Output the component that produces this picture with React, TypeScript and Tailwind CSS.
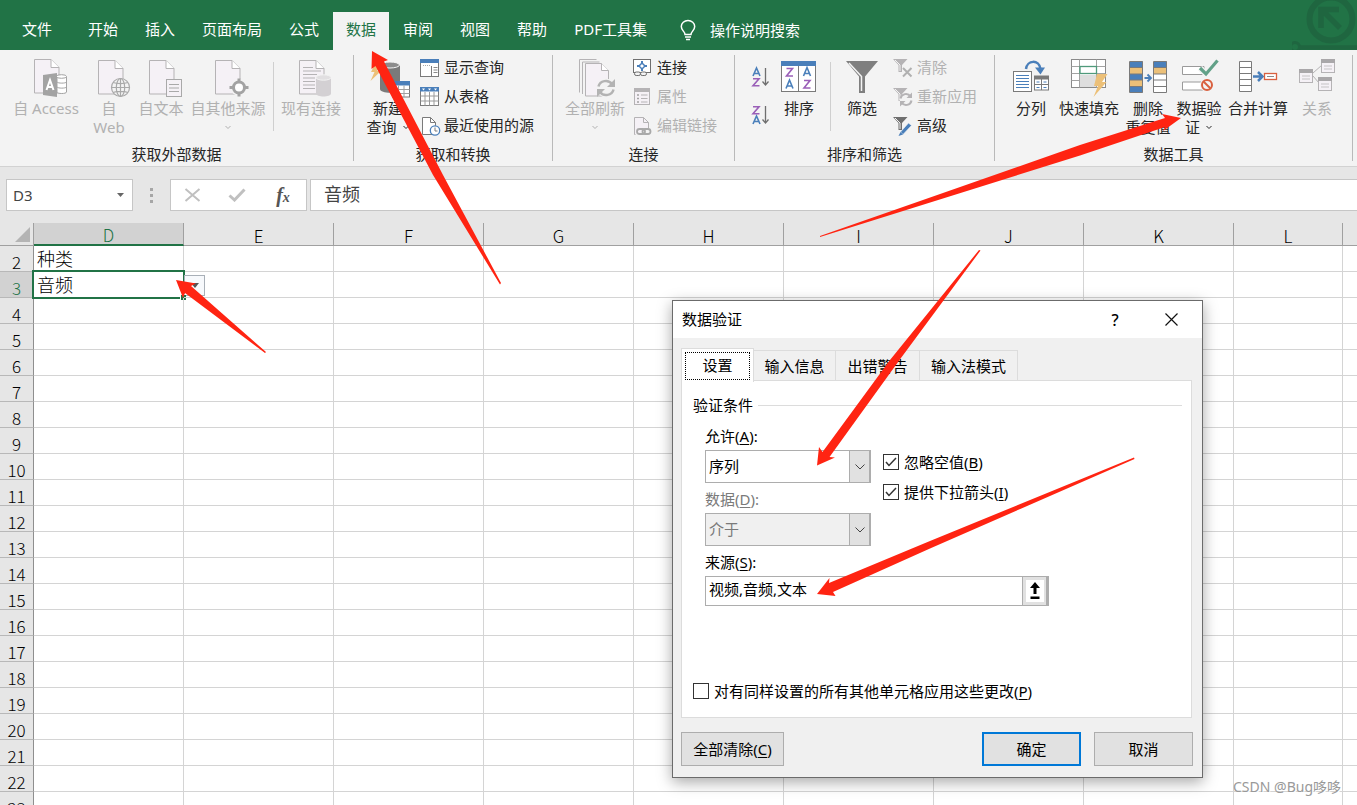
import { useState } from 'react';
import type { FC, ReactNode } from 'react';
import clsx from 'clsx';

const TABS = ['文件', '开始', '插入', '页面布局', '公式', '数据', '审阅', '视图', '帮助', 'PDF工具集'];
const COLUMNS = ['D', 'E', 'F', 'G', 'H', 'I', 'J', 'K', 'L', ''];
const ROWS = Array.from({ length: 22 }, (_, i) => i + 2);
const CELLS: Record<string, string> = { D2: '种类', D3: '音频' };

/* ---------- icons ---------- */

const Big: FC<{ children: ReactNode }> = ({ children }) => (
  <svg width="40" height="40" viewBox="0 0 40 40" fill="none" className="mb-px shrink-0 overflow-visible" aria-hidden="true">
    {children}
  </svg>
);

const Small: FC<{ children: ReactNode }> = ({ children }) => (
  <svg width="20" height="20" viewBox="0 0 20 20" fill="none" className="shrink-0 overflow-visible" aria-hidden="true">
    {children}
  </svg>
);

const Page: FC<{ x?: number; y?: number }> = ({ x = 8.5, y = 2.5 }) => (
  <g transform={`translate(${x} ${y})`} stroke="#b5b3b5">
    <path d="M0 0h16.500l8 8v25.500H0z" fill="#f5f1f6" />
    <path d="M16.500 0v8h8" fill="#fff" />
  </g>
);

const AccessIcon = () => (
  <Big>
    <Page x={8.500} y={1.500} />
    <path d="M31 18.500v15.500c0 2 9.500 2 9.500 0v-15.500" fill="#fff" stroke="#a3a3a3" />
    <ellipse cx="35.500" cy="18.500" rx="5" ry="1.800" fill="#fff" stroke="#a3a3a3" />
    <path d="M31 24c1 1.500 8.500 1.500 9.500 0M31 29c1 1.500 8.500 1.500 9.500 0" stroke="#a3a3a3" />
    <path d="M17 17l14-2v24l-14-2z" fill="#a3a3a3" />
    <path d="M20.500 32l3.500-10 3.500 10M21.700 29h4.600" stroke="#fff" strokeWidth="2" />
  </Big>
);

const WebIcon = () => (
  <Big>
    <Page x={9.500} />
    <g stroke="#a9a9a9" strokeWidth="1.200">
      <circle cx="31.500" cy="29.500" r="9" fill="#f3f3f3" />
      <ellipse cx="31.500" cy="29.500" rx="4.200" ry="9" />
      <path d="M22.500 29.500h18M31.500 20.500v18M24 24.500c4 1.500 11 1.500 15 0M24 34.500c4-1.500 11-1.500 15 0" />
    </g>
  </Big>
);

const TextFileIcon = () => (
  <Big>
    <Page />
    <rect x="25.500" y="21.500" width="15" height="17" fill="#f5f1f6" stroke="#a9a9a9" />
    <path d="M28 26.500h10M28 30h10M28 33.500h10" stroke="#a9a9a9" />
  </Big>
);

const OtherSourceIcon = () => (
  <Big>
    <Page x={7.500} />
    <circle cx="31" cy="29.500" r="8.500" fill="#f3f3f3" />
    <circle cx="31" cy="29.500" r="5.500" stroke="#a3a3a3" strokeWidth="3" fill="#fff" />
    <path d="M31 20.500v4M31 34.500v4M21.500 29.500h4M36.500 29.500h4" stroke="#a3a3a3" strokeWidth="3" />
  </Big>
);

const ExistingIcon = () => (
  <Big>
    <Page />
    <path d="M12 9.500h10M12 13h18M12 16.500h14M12 20h12M12 23.500h12M12 27h12M12 30.500h12" stroke="#b5b3b5" />
    <path d="M25 19.500v16c0 4 15 4 15 0v-16z" fill="#d3d0d3" />
    <ellipse cx="32.500" cy="19.500" rx="7.500" ry="2.700" fill="#e1dfe1" stroke="#f3f3f3" />
  </Big>
);

const NewQueryIcon = () => (
  <Big>
    <path d="M6 8l8-2-5 7h4l-10.500 10 4-9H3z" fill="#ecc078" />
    <path d="M12 7v24c0 5 20 5 20 0V7z" fill="#7a7a7a" />
    <ellipse cx="22" cy="7" rx="9.500" ry="3" fill="#8c8c8c" stroke="#f3f3f3" />
    <rect x="24.500" y="23.500" width="17" height="15.500" fill="#fff" stroke="#7a7a7a" />
    <path d="M24 23h18v4.500H24z" fill="#4a7fba" />
    <path d="M24.500 31.500h17M24.500 35.500h17M30.500 27.500v11.500M36 27.500v11.500" stroke="#a0a0a0" />
  </Big>
);

const RefreshAllIcon = () => (
  <Big>
    <path d="M4.500 34.500v-33h17M7.500 36v-32h17" stroke="#b5b3b5" />
    <g stroke="#b5b3b5">
      <path d="M10.500 5.500h16l7 7v25.500h-23z" fill="#f5f1f6" />
      <path d="M26.500 5.500v7h7" fill="#fff" />
    </g>
    <circle cx="31" cy="30" r="9.500" fill="#f3f3f3" />
    <path d="M23.500 28.500a7.500 7 0 0 1 13.500-2.500M38.500 31.500a7.500 7 0 0 1-13.500 2.500" stroke="#b3b3b3" strokeWidth="2.500" />
    <path d="M40 21v8h-8zM22 39v-8h8z" fill="#b3b3b3" />
  </Big>
);

const SortIcon = () => (
  <Big>
    <rect x="2.500" y="3.500" width="34" height="30" fill="#fff" stroke="#7a7a7a" />
    <path d="M2 3h35v5H2z" fill="#4a7fba" />
    <path d="M19.500 8v25" stroke="#7a7a7a" />
    <g strokeWidth="1.600">
      <path d="M7.500 10.500h6l-6 7.500h6.500M25 22.500h6l-6 7.500h6.500" stroke="#9a5fb8" />
      <path d="M7 30.500l3.500-8.500 3.500 8.500M8.200 28h4.600M24.500 18l3.500-8.500 3.500 8.500M25.700 15.500h4.600" stroke="#4a7fba" />
    </g>
  </Big>
);

const FilterIcon = () => (
  <Big>
    <path d="M4 3h32L23 18.500V35h-6V18.500z" fill="#7f7f7f" />
    <path d="M7 5l12.500 13.500V33" stroke="#f3f3f3" strokeWidth="1.500" />
  </Big>
);

const SplitIcon = () => (
  <Big>
    <rect x="2.500" y="13.500" width="18" height="20" fill="#fff" stroke="#7a7a7a" />
    <path d="M5 17.500h13M5 20.500h13M5 23.500h13M5 26.500h13M5 29.500h13" stroke="#4a7fba" />
    <rect x="23.500" y="18.500" width="14" height="13.500" fill="#fff" stroke="#7a7a7a" />
    <path d="M23 17.500h15v4H23z" fill="#7a7a7a" />
    <path d="M30.500 21v11M23.500 26.500h14" stroke="#7a7a7a" />
    <path d="M25.500 24h3M32.500 24h3M25.500 29.500h3M32.500 29.500h3" stroke="#4a7fba" />
    <path d="M15 11C16 2 28 1 29.500 11" stroke="#4a7fba" strokeWidth="2.500" />
    <path d="M24 9.500h10l-4.500 7z" fill="#4a7fba" />
  </Big>
);

const FlashFillIcon = () => (
  <Big>
    <rect x="2.500" y="1.500" width="34" height="28" fill="#fff" stroke="#8a8a8a" />
    <path d="M11 17h17v12H11z" fill="#dedede" />
    <path d="M2.500 8.500h34M2.500 15.500h34M2.500 22.500h8M10.500 1.500v28M27.500 1.500v28" stroke="#a3a3a3" />
    <rect x="11" y="8.500" width="16.500" height="7" fill="#fff" stroke="#4f9a7b" strokeWidth="1.300" />
    <path d="M28 16h10.500L33 24h4.500L24.500 39l4.500-11h-4z" fill="#ecc078" />
  </Big>
);

const DedupeIcon = () => (
  <Big>
    <path d="M2 3.500h13v31H2zM26 3.500h13v31H26z" fill="#fff" />
    <path d="M2 3.500h13v6H2zM2 16h13v6H2zM2 28.500h13v6H2zM26 3.500h13v6H26z" fill="#4a7fba" />
    <path d="M2 9.500h13v6.500H2zM2 22h13v6.500H2zM26 9.500h13v6.500H26z" fill="#ecc078" />
    <path
      d="M1.500 3.500h13v31h-13zM25.500 3.500h13v31h-13zM1.500 9.500h13M1.500 16h13M1.500 22h13M1.500 28.500h13M25.500 9.500h13M25.500 16h13M25.500 22h13M25.500 28.500h13"
      stroke="#7a7a7a"
    />
    <path d="M16.500 20h6M19.500 16.500l3.500 3.500-3.500 3.500" stroke="#4a7fba" strokeWidth="1.800" />
  </Big>
);

const ValidationIcon = () => (
  <Big>
    <path d="M3.500 8.500H25v8H3.500zM3.500 24H25v8H3.500z" fill="#fff" stroke="#9a9a9a" />
    <path d="M21 10l6 6L38.500 2.500" stroke="#f3f3f3" strokeWidth="6" />
    <path d="M21 10l6 6L38.500 2.500" stroke="#62a188" strokeWidth="3.200" />
    <circle cx="28" cy="27" r="7" fill="#f3f3f3" />
    <circle cx="28" cy="27" r="5" stroke="#d9603f" strokeWidth="2" />
    <path d="M24.500 23.500l7 7" stroke="#d9603f" strokeWidth="2" />
  </Big>
);

const ConsolidateIcon = () => (
  <Big>
    <path d="M1.500 3.500h12v30h-12zM1.500 9.500h12M1.500 15.500h12M1.500 21.500h12M1.500 27.500h12" fill="#fff" stroke="#7a7a7a" />
    <path d="M15 18.500h8M20 14l4.500 4.500L20 23" stroke="#4a7fba" strokeWidth="2.500" />
    <rect x="26.500" y="15.500" width="12" height="6" fill="#fff" stroke="#d9603f" strokeWidth="1.300" />
    <path d="M29 18.500h7" stroke="#8a8a8a" />
  </Big>
);

const RelationIcon = () => (
  <Big>
    <path d="M16 15l9-8M16 18l6 7" stroke="#b5b3b5" />
    {[[2.5, 11.5], [24.5, 1.5], [21.5, 19.5]].map(([x, y]) => (
      <g key={x} transform={`translate(${x} ${y})`}>
        <rect width="13" height="13" fill="#f5f1f6" stroke="#b5b3b5" />
        <path d="M-.500-.500h14v4h-14z" fill="#a9a7a9" />
        <path d="M2.500 6.500h8M2.500 9.500h8" stroke="#c5c3c5" />
      </g>
    ))}
  </Big>
);

const ShowQueryIcon = () => (
  <Small>
    <rect x=".5" y="1.500" width="18" height="17" fill="#fff" stroke="#7a7a7a" />
    <path d="M0 1h19v4H0z" fill="#4a7fba" />
    <path d="M11.500 8v10.500" stroke="#7a7a7a" />
    <path d="M13.500 9.500h4M13.500 12h4M13.500 14.500h4" stroke="#8a8a8a" />
    <path d="M3 7.500h8" stroke="#a9a9a9" strokeDasharray="1 1" />
  </Small>
);

const FromTableIcon = () => (
  <Small>
    <rect x=".5" y=".5" width="18" height="18" fill="#fff" stroke="#7a7a7a" />
    <path d="M0 0h19v4.500H0z" fill="#4a7fba" />
    <path d="M2 1.500h3l-1.500 2zM8 1.500h3l-1.500 2zM14 1.500h3l-1.500 2z" fill="#fff" />
    <path d="M.5 9h18M.5 14h18M5 5v13.500M9.500 5v13.500M14 5v13.500" stroke="#9a9a9a" />
  </Small>
);

const RecentIcon = () => (
  <Small>
    <path d="M2.500 1.500h8l5 5v12h-13z" fill="#fff" stroke="#7a7a7a" />
    <path d="M10.500 1.500v5h5" stroke="#7a7a7a" />
    <circle cx="15" cy="14.500" r="4.700" fill="#fff" stroke="#4a7fba" strokeWidth="1.300" />
    <path d="M15 11.500v3.500h2.500" stroke="#7a7a7a" />
  </Small>
);

const ConnectionIcon = () => (
  <Small>
    <rect x=".5" y="1.500" width="17" height="13" fill="#fff" stroke="#6f6f6f" />
    <path d="M9 5l3 3-3 3-3-3z" stroke="#4a7fba" strokeWidth="1.500" />
    <path d="M9 3v2M9 11v2M4 8h2M12 8h2" stroke="#4a7fba" strokeWidth="2" />
    <rect x="1.500" y="14" width="6" height="3.500" rx="1.700" fill="#f3f3f3" stroke="#6f6f6f" />
    <rect x="7.500" y="14" width="6" height="3.500" rx="1.700" fill="#f3f3f3" stroke="#6f6f6f" />
  </Small>
);

const PropertiesIcon = () => (
  <Small>
    <rect x="1.500" y="1.500" width="15" height="16" fill="#f5f1f6" stroke="#b5b3b5" />
    <path d="M1 1h16v4H1z" fill="#b5b3b5" />
    <path d="M8 8h6.500M8 11.500h6.500M8 15h6.500" stroke="#b5b3b5" />
    <path d="M4 8h2M4 11.500h2M4 15h2" stroke="#a3a3a3" strokeWidth="1.500" />
  </Small>
);

const EditLinkIcon = () => (
  <Small>
    <path d="M2.500 18.500h-1v-17h9l5 5v6" fill="#f5f1f6" stroke="#b5b3b5" />
    <path d="M10.500 1.500v5h5" stroke="#b5b3b5" />
    <rect x="4" y="13" width="8" height="5" rx="2.500" stroke="#a9a9a9" strokeWidth="1.800" />
    <rect x="9.500" y="13" width="8" height="5" rx="2.500" stroke="#a9a9a9" strokeWidth="1.800" />
  </Small>
);

const MiniFunnel: FC<{ color: string }> = ({ color }) => (
  <>
    <path d="M0 1h14.500L9 7v7H5.500V7z" fill={color} />
    <path d="M2 2l5 5v6" stroke="#f3f3f3" />
  </>
);

const ClearIcon = () => (
  <Small>
    <MiniFunnel color="#b5b3b5" />
    <path d="M10 10l8.500 8.500M18.500 10L10 18.500" stroke="#b0b0b0" strokeWidth="2" />
  </Small>
);

const ReapplyIcon = () => (
  <Small>
    <MiniFunnel color="#b5b3b5" />
    <circle cx="13" cy="12.500" r="6.500" fill="#f3f3f3" />
    <path d="M7.500 11.500a5.500 5.500 0 0 1 10-2M18.500 13.500a5.500 5.500 0 0 1-10 2" stroke="#b5b3b5" strokeWidth="2" />
    <path d="M19 5.500v5.500h-5.500zM7 19.500V14h5.500z" fill="#b5b3b5" />
  </Small>
);

const AdvancedIcon = () => (
  <Small>
    <MiniFunnel color="#6f6f6f" />
    <path d="M7.500 16L15.500 7l3 2.500L10 18.500z" fill="#4a7fba" stroke="#f3f3f3" strokeWidth=".6" />
    <path d="M7.500 16l2.500 2.500-4.500 1.500z" fill="#4a7fba" />
  </Small>
);

const AzIcon: FC<{ desc?: boolean }> = ({ desc }) => (
  <Small>
    <g strokeWidth="1.600">
      <path d="M2 9l3.500-8L9 9M3.300 6.500h4.400" stroke="#4a7fba" transform={desc ? 'translate(0 10)' : undefined} />
      <path d="M2 11.800h6l-6 7h6.500" stroke="#9a5fb8" transform={desc ? 'translate(0 -10)' : undefined} />
    </g>
    <path d="M14.500 1v17M11.500 14.500l3 3.500 3-3.500" stroke="#6f6f6f" strokeWidth="1.300" />
  </Small>
);

const Chevron = () => (
  <svg width="8" height="5" viewBox="0 0 8 5" fill="none" aria-hidden="true">
    <path d="M1.500 1L4 3.500 6.500 1" stroke="currentColor" />
  </svg>
);

/* ---------- ribbon ---------- */

type BigButtonProps = { icon: ReactNode; lines: string[]; chevron?: boolean; disabled?: boolean; className: string };

const BigButton: FC<BigButtonProps> = ({ icon, lines, chevron, disabled, className }) => (
  <button
    type="button"
    disabled={disabled}
    className={clsx('flex shrink-0 flex-col items-center pt-2 whitespace-nowrap', disabled && 'text-[#b1b1b1]', className)}
  >
    {icon}
    {lines.map((line, i) => (
      <span key={line} className="flex h-[19px] items-center gap-[5px] leading-[19px]">
        {line}
        {chevron && i > 0 && i === lines.length - 1 && <Chevron />}
      </span>
    ))}
    {chevron && lines.length === 1 && <span className="flex h-[19px] items-center"><Chevron /></span>}
  </button>
);

const SmallButton: FC<{ icon: ReactNode; label: string; disabled?: boolean }> = ({ icon, label, disabled }) => (
  <button
    type="button"
    disabled={disabled}
    className={clsx('flex h-[29px] items-center gap-1 whitespace-nowrap', disabled && 'text-[#b1b1b1]')}
  >
    {icon}
    {label}
  </button>
);

const Group: FC<{ title: string; className: string; children: ReactNode }> = ({ title, className, children }) => (
  <section className={clsx('flex shrink-0 flex-col', className)}>
    <div className="flex h-[94px] items-start">{children}</div>
    <h2 className="text-center leading-5">{title}</h2>
  </section>
);

const GroupLine = () => <div className="mt-[5px] h-[106px] w-px shrink-0 bg-[#b9b9b9]" />;
const InnerLine = () => <div className="mt-3 h-[69px] w-px shrink-0 bg-[#cfcfcf]" />;

const Ribbon = () => (
  <div className="flex h-[117px] shrink-0 overflow-hidden border-b border-[#d2d2d2] bg-[#f3f3f3] text-[#262626]">
    <Group title="获取外部数据" className="w-[353px]">
      <BigButton icon={<AccessIcon />} lines={['自 Access']} disabled className="ml-[6px] w-20" />
      <BigButton icon={<WebIcon />} lines={['自', 'Web']} disabled className="w-[46px]" />
      <BigButton icon={<TextFileIcon />} lines={['自文本']} disabled className="w-[58px]" />
      <BigButton icon={<OtherSourceIcon />} lines={['自其他来源']} chevron disabled className="mr-[7px] w-[76px]" />
      <InnerLine />
      <BigButton icon={<ExistingIcon />} lines={['现有连接']} disabled className="w-[74px]" />
    </Group>
    <GroupLine />
    <Group title="获取和转换" className="w-[198px]">
      <BigButton icon={<NewQueryIcon />} lines={['新建', '查询']} chevron className="ml-[6px] w-14" />
      <div className="flex flex-col pt-[3px] pl-1">
        <SmallButton icon={<ShowQueryIcon />} label="显示查询" />
        <SmallButton icon={<FromTableIcon />} label="从表格" />
        <SmallButton icon={<RecentIcon />} label="最近使用的源" />
      </div>
    </Group>
    <GroupLine />
    <Group title="连接" className="w-[181px]">
      <BigButton icon={<RefreshAllIcon />} lines={['全部刷新']} chevron disabled className="ml-2 w-[68px]" />
      <div className="flex flex-col pt-[3px] pl-1">
        <SmallButton icon={<ConnectionIcon />} label="连接" />
        <SmallButton icon={<PropertiesIcon />} label="属性" disabled />
        <SmallButton icon={<EditLinkIcon />} label="编辑链接" disabled />
      </div>
    </Group>
    <GroupLine />
    <Group title="排序和筛选" className="w-[259px]">
      <div className="flex flex-col gap-[18px] pt-[17px] pr-[6px] pl-4">
        <button type="button" aria-label="升序"><AzIcon /></button>
        <button type="button" aria-label="降序"><AzIcon desc /></button>
      </div>
      <BigButton icon={<SortIcon />} lines={['排序']} className="mr-[9px] w-11" />
      <InnerLine />
      <BigButton icon={<FilterIcon />} lines={['筛选']} className="ml-[9px] w-11" />
      <div className="flex flex-col pt-[3px] pl-[9px]">
        <SmallButton icon={<ClearIcon />} label="清除" disabled />
        <SmallButton icon={<ReapplyIcon />} label="重新应用" disabled />
        <SmallButton icon={<AdvancedIcon />} label="高级" />
      </div>
    </Group>
    <GroupLine />
    <Group title="数据工具" className="w-[357px]">
      <BigButton icon={<SplitIcon />} lines={['分列']} className="ml-3 w-12" />
      <BigButton icon={<FlashFillIcon />} lines={['快速填充']} className="w-[68px]" />
      <BigButton icon={<DedupeIcon />} lines={['删除', '重复值']} className="w-[50px]" />
      <BigButton icon={<ValidationIcon />} lines={['数据验', '证']} chevron className="w-[52px]" />
      <BigButton icon={<ConsolidateIcon />} lines={['合并计算']} className="w-[66px]" />
      <BigButton icon={<RelationIcon />} lines={['关系']} disabled className="w-[52px]" />
    </Group>
    <GroupLine />
  </div>
);

const TabBar = () => (
  <header className="relative flex h-[50px] shrink-0 items-end overflow-hidden bg-[#217346] text-white">
    <nav className="flex gap-px">
      {TABS.map((tab) => (
        <button
          key={tab}
          type="button"
          className={clsx(
            'h-[38px] pb-1 whitespace-nowrap',
            tab === '文件' ? 'w-[74px]' : 'px-[13px]',
            tab === '数据' && 'bg-[#f3f3f3] text-[#217346]',
          )}
        >
          {tab}
        </button>
      ))}
    </nav>
    <button type="button" className="ml-5 flex h-[38px] items-center gap-[14px] pb-[2px]">
      <svg width="16" height="20" viewBox="0 0 16 20" fill="none" stroke="#fff" strokeWidth="1.500" className="overflow-visible" aria-hidden="true">
        <path d="M5 14.500c0-3-3.700-4-3.700-8a6.700 6 0 0 1 13.400 0c0 4-3.700 5-3.700 8zM5 17h6M6 19.500h4" />
      </svg>
      操作说明搜索
    </button>
    <svg className="absolute top-0 right-0" width="65" height="50" viewBox="0 0 65 50" fill="none" stroke="#1f6640" aria-hidden="true">
      <circle cx="39" cy="19" r="21.500" strokeWidth="6" />
      <path d="M29 28V9.500h18M30 10l18 18" strokeWidth="5.500" />
      <circle cx="3" cy="47" r="4.500" strokeWidth="3" />
      <path d="M7 47.500h58" strokeWidth="4.500" />
    </svg>
  </header>
);

const FormulaBar = () => (
  <div className="flex h-14 shrink-0 items-center bg-[#e6e6e6] pl-[6px] text-[#444]">
    <div className="flex h-8 w-[127px] items-center border border-[#c6c6c6] bg-white pr-2">
      <input aria-label="名称框" defaultValue="D3" className="min-w-0 flex-1 pl-[6px] outline-none" />
      <svg width="7" height="4" viewBox="0 0 7 4" aria-hidden="true"><path d="M0 0h7L3.500 4z" fill="#666" /></svg>
    </div>
    <div className="flex w-[37px] flex-col items-center gap-[3px]">
      <i className="size-[3px] bg-[#a6a6a6]" />
      <i className="size-[3px] bg-[#a6a6a6]" />
      <i className="size-[3px] bg-[#a6a6a6]" />
    </div>
    <div className="mr-[3px] flex h-8 w-[137px] items-center justify-between border border-[#c6c6c6] bg-white px-[13px]">
      <button type="button" aria-label="取消输入">
        <svg width="17" height="14" viewBox="0 0 17 14" stroke="#c0c0c0" strokeWidth="2" aria-hidden="true"><path d="M1.500 1l14 12M15.500 1l-14 12" /></svg>
      </button>
      <button type="button" aria-label="确认输入">
        <svg width="18" height="14" viewBox="0 0 18 14" fill="none" stroke="#c0c0c0" strokeWidth="3" aria-hidden="true"><path d="M1.500 7.500l5 4.500L16.500 1.500" /></svg>
      </button>
      <button type="button" className="w-5 font-['Liberation_Serif',serif] text-xl leading-6 font-bold text-[#555] italic">
        f<span className="text-sm">x</span>
      </button>
    </div>
    <input
      aria-label="编辑栏"
      defaultValue="音频"
      className="h-8 min-w-0 flex-1 border border-r-0 border-[#c6c6c6] bg-white pb-1 pl-[13px] text-lg outline-none"
    />
  </div>
);

/* ---------- sheet ---------- */

const Sheet = () => (
  <main className="min-h-0 flex-1 bg-white font-['Noto_Sans_CJK_SC',sans-serif] font-light text-black">
    <table className="w-full table-fixed border-separate border-spacing-0">
      <colgroup>
        <col className="w-[34px]" />
        {COLUMNS.map((c) => (
          <col key={c} className={clsx(c === 'L' ? 'w-[109px]' : c !== '' && 'w-[150px]')} />
        ))}
      </colgroup>
      <thead>
        <tr className="h-[23px]">
          <th className="border-r border-b border-[#a0a0a0] bg-[#e6e6e6] p-0">
            <svg width="15" height="15" viewBox="0 0 15 15" className="ml-[15px]" aria-hidden="true"><path d="M15 0v15H0z" fill="#b4b4b4" /></svg>
          </th>
          {COLUMNS.map((c) => (
            <th
              key={c}
              scope="col"
              className={clsx(
                'border-r px-0 pt-[2px] pb-0 text-[17px] leading-[19px] font-light last:border-r-0',
                c === 'D' ? 'border-b-2 border-r-[#a0a0a0] border-b-[#217346] bg-[#d2d2d2] text-[#217346]' : 'border-b border-[#a0a0a0] bg-[#e6e6e6]',
              )}
            >
              {c}
            </th>
          ))}
        </tr>
      </thead>
      <tbody>
        {ROWS.map((row) => (
          <tr key={row} className="h-[26px]">
            <th
              scope="row"
              className={clsx(
                'border-r border-b border-r-[#8f8f8f] border-b-[#b8b8b8] p-0 align-bottom text-[17px] leading-[19px] font-light',
                row === 3 ? 'bg-[#d2d2d2] text-[#217346]' : 'bg-[#e6e6e6]',
              )}
            >
              {row}
            </th>
            {COLUMNS.map((c) => (
              <td key={c} className="relative border-r border-b border-[#d4d4d4] p-0 pl-[3px] align-top text-lg leading-6 last:border-r-0">
                {CELLS[c + row]}
                {c + row === 'D3' && (
                  <>
                    <span className="absolute -top-[2px] -right-[2px] -bottom-[2px] -left-[2px] border-2 border-[#217346]" />
                    <button
                      type="button"
                      aria-label="展开下拉列表"
                      className="absolute top-[3px] -right-[22px] flex size-[21px] items-center justify-center border border-[#a9b0b8] bg-[#f7f9fc]"
                    >
                      <svg width="8" height="5" viewBox="0 0 8 5" aria-hidden="true"><path d="M0 0h8L4 5z" fill="#555" /></svg>
                    </button>
                    <span className="absolute -right-[3px] -bottom-[3px] size-[6px] border-t border-l border-white bg-[#217346]" />
                  </>
                )}
              </td>
            ))}
          </tr>
        ))}
      </tbody>
    </table>
  </main>
);

/* ---------- dialog ---------- */

const Key: FC<{ k: string }> = ({ k }) => (
  <>
    (<u className="underline-offset-2">{k}</u>)
  </>
);

type SelectFieldProps = { id: string; label: string; k: string; options: string[]; disabled?: boolean };

const SelectField: FC<SelectFieldProps> = ({ id, label, k, options, disabled }) => (
  <div className={clsx('flex flex-col gap-1', disabled && 'text-[#7a7a7a]')}>
    <label htmlFor={id} className="leading-5">{label}<Key k={k} />:</label>
    <div className="relative h-[33px]">
      <select
        id={id}
        disabled={disabled}
        className={clsx(
          'size-full appearance-none border border-[#adadad] pr-6 pl-[3px] opacity-100 outline-none',
          disabled ? 'bg-[#f0f0f0]' : 'bg-white',
        )}
      >
        {options.map((o) => <option key={o}>{o}</option>)}
      </select>
      <span className="pointer-events-none absolute inset-y-0 right-0 flex w-[22px] items-center justify-center border border-r-2 border-[#adadad] bg-[#e1e1e1]">
        <svg width="10" height="6" viewBox="0 0 10 6" fill="none" stroke="#444" aria-hidden="true"><path d="M.5.5L5 5 9.500.5" /></svg>
      </span>
    </div>
  </div>
);

const CheckBox: FC<{ label: string; k: string; initial?: boolean; className?: string }> = ({ label, k, initial = false, className }) => {
  const [on, setOn] = useState(initial);
  return (
    <label className={clsx('flex items-center gap-[5px] whitespace-nowrap', className)}>
      <span className="grid size-4 place-items-center">
        <input
          type="checkbox"
          checked={on}
          onChange={(e) => setOn(e.target.checked)}
          className="col-start-1 row-start-1 size-4 appearance-none border border-[#333] bg-white"
        />
        {on && (
          <svg width="12" height="10" viewBox="0 0 12 10" fill="none" stroke="#333" strokeWidth="1.500" className="pointer-events-none col-start-1 row-start-1" aria-hidden="true">
            <path d="M1 5l3 3.500L11 1" />
          </svg>
        )}
      </span>
      <span>{label}<Key k={k} /></span>
    </label>
  );
};

const DialogTab: FC<{ label: string; className: string }> = ({ label, className }) => (
  <button type="button" role="tab" className={clsx('h-[31px] border border-l-0 border-[#dcdcdc] leading-6', className)}>
    {label}
  </button>
);

const ValidationDialog = () => (
  <div
    role="dialog"
    aria-label="数据验证"
    className="absolute top-[300px] left-[672px] flex w-[531px] flex-col border border-[#6b6b6b] bg-[#f0f0f0] text-black shadow-[0_4px_14px_rgba(0,0,0,0.35)]"
  >
    <div className="flex h-[37px] items-center bg-white pr-6 pl-[9px]">
      <h1 className="flex-1">数据验证</h1>
      <button type="button" aria-label="帮助" className="w-5 text-base font-medium">?</button>
      <button type="button" aria-label="关闭" className="ml-10">
        <svg width="13" height="13" viewBox="0 0 13 13" stroke="#111" strokeWidth="1.200" aria-hidden="true"><path d="M.5.5l12 12M12.500.5l-12 12" /></svg>
      </button>
    </div>
    <div className="flex flex-col px-2 pt-[10px] pb-[11px]">
      <div role="tablist" className="flex items-end">
        <button type="button" role="tab" aria-selected="true" className="relative z-10 -mb-px flex h-[34px] w-[73px] border border-b-0 border-[#dcdcdc] bg-white p-[3px]">
          <span className="flex h-7 flex-1 items-center justify-center border border-dotted border-black pb-[2px]">设置</span>
        </button>
        <DialogTab label="输入信息" className="w-[82px]" />
        <DialogTab label="出错警告" className="w-[84px]" />
        <DialogTab label="输入法模式" className="w-[98px]" />
      </div>
      <div className="-mt-px mr-[2px] flex flex-col border border-[#dcdcdc] bg-white pt-[14px] pr-[9px] pb-4 pl-[11px]">
        <div className="flex items-center gap-[5px] leading-5">
          验证条件
          <span className="h-px flex-1 bg-[#dcdcdc]" />
        </div>
        <div className="flex flex-col gap-[6px] pt-[11px] pl-3">
          <div className="flex gap-3">
            <div className="flex w-[166px] flex-col gap-[6px]">
              <SelectField id="allow" label="允许" k="A" options={['序列', '任何值', '整数', '小数', '日期']} />
              <SelectField id="data" label="数据" k="D" options={['介于', '未介于', '等于']} disabled />
            </div>
            <div className="flex flex-col pt-[21px]">
              <CheckBox label="忽略空值" k="B" initial className="h-[30px]" />
              <CheckBox label="提供下拉箭头" k="I" initial className="h-[30px]" />
            </div>
          </div>
          <div className="flex flex-col gap-1">
            <label htmlFor="source" className="leading-5">来源<Key k="S" />:</label>
            <div className="flex h-[30px] w-[344px] border border-[#adadad]">
              <input id="source" defaultValue="视频,音频,文本" className="min-w-0 flex-1 pb-1 pl-[3px] outline-none" />
              <button type="button" aria-label="选择区域" className="flex w-[26px] items-center justify-center border-r-2 border-l border-[#adadad] bg-[#e1e1e1]">
                <svg width="18" height="22" viewBox="0 0 18 22" aria-hidden="true">
                  <path d="M0 0h18v22H0z" fill="#fff" />
                  <path d="M9 2l5 6h-3.500v6h-3V8H4zM4.500 16.500h9V19h-9z" fill="#000" />
                </svg>
              </button>
            </div>
          </div>
        </div>
        <CheckBox label="对有同样设置的所有其他单元格应用这些更改" k="P" className="mt-[75px] h-5" />
      </div>
      <div className="mt-[14px] mr-px flex gap-[13px]">
        <button type="button" className="h-[34px] w-[103px] border border-[#adadad] bg-[#e1e1e1]">全部清除<Key k="C" /></button>
        <button type="button" className="ml-auto h-[34px] w-[99px] border-2 border-[#0078d7] bg-[#e1e1e1]">确定</button>
        <button type="button" className="h-[34px] w-[99px] border border-[#adadad] bg-[#e1e1e1]">取消</button>
      </div>
    </div>
  </div>
);

// red pointers drawn over everything
const Pointers = () => (
  <svg className="pointer-events-none absolute top-0 left-0" width="1357" height="805" viewBox="0 0 1357 805" fill="#ff2412" aria-hidden="true">
    <path d="M372 51l16 9-4 1.500L443 175l58 108-1 1.500L433 175 375.500 66l-4 3z" />
    <path d="M1181 118l-18 13 2-4-85 28.500-260 81.500v-1l260-91 85-27-3-4z" />
    <path d="M817 465.500l2-18.500 3.500 5L890 360l89-110 1.500.5L899.500 360l-70 97 5.500.5z" />
    <path d="M817 594l12.500-16-.5 5L930 541l204-83.500.5 1.500L930 548.500 833 592l2.500 4z" />
    <path d="M176 280l20 3.500-5 2.500 75 66-1 1-80-60-2 5z" />
  </svg>
);

export default function App() {
  return (
    <div className="relative flex h-screen flex-col overflow-hidden font-['Noto_Sans','Noto_Sans_CJK_SC',sans-serif] text-[15px]">
      <TabBar />
      <Ribbon />
      <FormulaBar />
      <Sheet />
      <ValidationDialog />
      <Pointers />
      <span className="absolute right-4 bottom-2 text-sm leading-5 text-[#999] [text-shadow:1px_1px_0_#fff]">CSDN @Bug哆哆</span>
    </div>
  );
}
